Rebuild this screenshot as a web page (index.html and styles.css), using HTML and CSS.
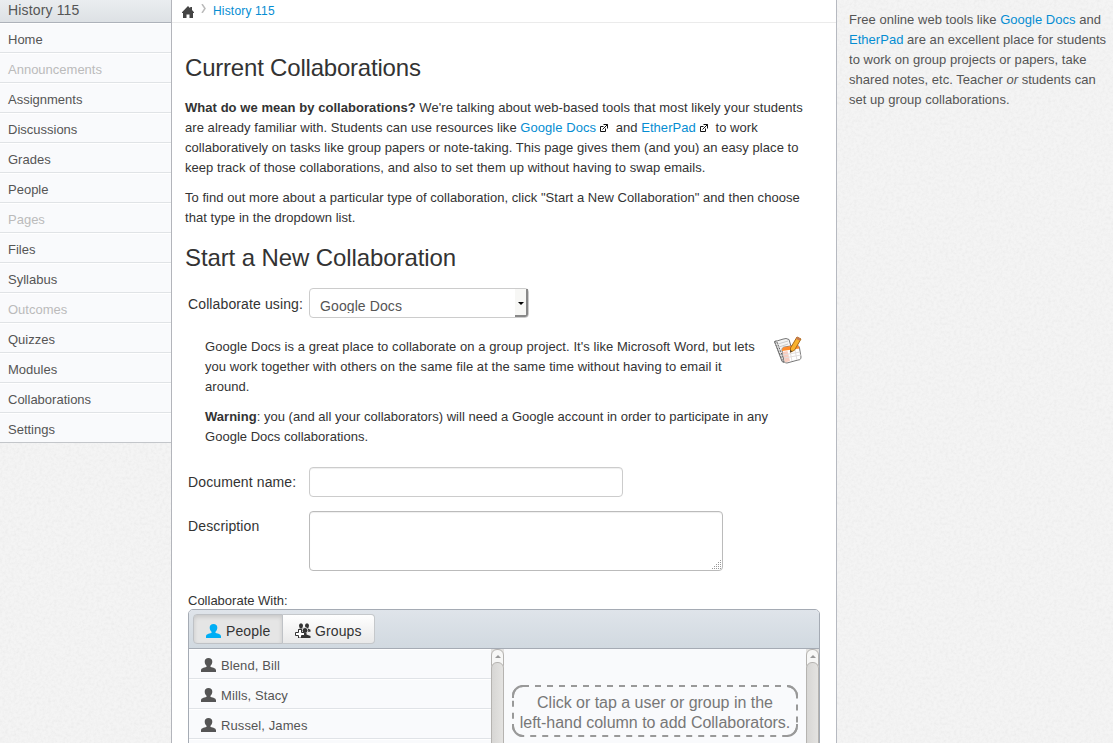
FILE: index.html
```html
<!DOCTYPE html>
<html lang="en">
<head>
<meta charset="utf-8">
<title>Collaborations: History 115</title>
<link rel="stylesheet" href="styles.css">
</head>
<body>
<svg class="defs" aria-hidden="true">
  <symbol id="person" viewBox="0 0 15 14"><path d="M7.500 0C9.900 0 11.300 1.300 11.300 3.500 11.300 5.500 10.500 7 9.500 7.800v1.200c3 .7 5.500 1.300 5.500 3.500V14H0v-1.500C0 10.300 2.500 9.700 5.500 9V7.800C4.500 7 3.700 5.500 3.700 3.500 3.700 1.300 5.100 0 7.500 0z"/></symbol>
  <symbol id="external" viewBox="0 0 8 8"><path d="M3.500 2.500h-3v5h5v-3M2.500 5.500l5-5M3.500.5h4v4" fill="none" stroke="#111"/></symbol>
</svg>
<div class="app">
  <aside class="side">
    <nav class="menu">
      <div class="course">History 115</div>
      <a>Home</a><a class="off">Announcements</a><a>Assignments</a><a>Discussions</a><a>Grades</a><a>People</a><a class="off">Pages</a><a>Files</a><a>Syllabus</a><a class="off">Outcomes</a><a>Quizzes</a><a>Modules</a><a>Collaborations</a><a>Settings</a>
    </nav>
  </aside>
  <main class="main">
    <div class="crumbs">
      <svg class="home" viewBox="0 0 12 12"><path d="M6 0l2.200 2.200V1H10v3l2 2.300V7h-1v5H7.500V8.500h-3V12H1V7H0v-.7z"/></svg>
      <svg class="chev" viewBox="0 0 5 9"><path d="M1 0l3 4.500L1 9" fill="none" stroke="#bbb" stroke-width="1.500"/></svg>
      <a class="link">History 115</a>
    </div>
    <div class="content">
      <h2 class="first">Current Collaborations</h2>
      <p class="text intro"><b>What do we mean by collaborations?</b> We're talking about web-based tools that most likely your students<br>are already familiar with. Students can use resources like <a class="link">Google Docs</a><svg class="ext"><use href="#external"/></svg> and <a class="link">EtherPad</a><svg class="ext"><use href="#external"/></svg> to work<br>collaboratively on tasks like group papers or note-taking. This page gives them (and you) an easy place to<br>keep track of those collaborations, and also to set them up without having to swap emails.</p>
      <p class="text more">To find out more about a particular type of collaboration, click "Start a New Collaboration" and then choose<br>that type in the dropdown list.</p>
      <h2 class="second">Start a New Collaboration</h2>
      <div class="row using"><label>Collaborate using:</label>
        <div class="select"><span>Google Docs</span><i class="drop"></i></div></div>
      <div class="info">
        <div>
          <p class="text about">Google Docs is a great place to collaborate on a group project. It's like Microsoft Word, but lets<br>you work together with others on the same file at the same time without having to email it<br>around.</p>
          <p class="text warning"><b>Warning</b>: you (and all your collaborators) will need a Google account in order to participate in any<br>Google Docs collaborations.</p>
        </div>
        <svg class="docs" viewBox="0 0 30 28">
          <path d="M1.500 5.500C5 5 9 3 13 2.500l3 1 5 17-10 6-2-1z" fill="#f4f4f4" stroke="#777"/>
          <path d="M1.500 5.500l2-.5 8 20-1.500 1z" fill="#ddd" stroke="#666" stroke-dasharray="2 1"/>
          <path d="M5 8l10-3M6 11l9-3" stroke="#ccc"/>
          <path d="M9 14c0-2 1-3 3-3l11-2c2 0 3 1 3.500 3l1.500 9c0 2-1 3-3 3l-11 3c-2 0-2.500-1-3-2z" fill="#fff" stroke="#777"/>
          <path d="M9 15c0-3 1-4 3-4l11-2c2 0 3 1 3.500 3.500z" fill="#ff8c2c"/>
          <path d="M9.500 16l5-1 2.500 10-5 1.500z" fill="#f8cdc0"/>
          <path d="M10 19l17-3M11 22l17-3M17 15l2 10M22 14l2 10" stroke="#e2dede" fill="none"/>
          <path d="M17.500 12l6.500-11 4 2-6.500 11.200-4 2z" fill="#f9b22d" stroke="#a86a1a"/>
          <path d="M24 .8l3.800 2-1.200 2-3.800-2z" fill="#c77b50"/><path d="M17.300 14v2.500l2-1.300z" fill="#333"/>
        </svg>
      </div>
      <div class="row name"><label>Document name:</label><div class="input"></div></div>
      <div class="row desc"><label>Description</label><div class="area"><svg class="grip" viewBox="0 0 10 10"><path d="M8 .5h1M6 2.500h1M8 2.500h1M4 4.500h1M6 4.500h1M8 4.500h1M2 6.500h1M4 6.500h1M6 6.500h1M8 6.500h1M0 8.500h1M2 8.500h1M4 8.500h1M6 8.500h1M8 8.500h1" stroke="#999"/></svg></div></div>
      <div class="with">Collaborate With:</div>
      <section class="picker">
        <div class="tabs">
          <div class="tab on"><svg class="person blue"><use href="#person"/></svg>People</div>
          <div class="tab"><svg class="group" viewBox="0 0 16 15"><g fill="#333"><ellipse cx="6" cy="2.800" rx="2" ry="2.500"/><ellipse cx="12" cy="2.800" rx="2" ry="2.500"/><path d="M3 8V6.500L5 5.500h2L9 6l2-.5h2l2.500 1.200v2H3z"/></g><ellipse cx="10" cy="7.500" rx="2.800" ry="3" fill="#333" stroke="#f7f7f7" stroke-width=".8"/><path d="M5 15v-2l4-1.500V10h2.500v1.500l4 1.500v2z" fill="#333"/><path d="M3.500 6.500h3v3h3v3h-3v2.500h-3v-2.500h-3v-3h3z" fill="#fff" stroke="#333"/></svg>Groups</div>
        </div>
        <div class="panes">
          <div class="people">
            <div><svg class="person"><use href="#person"/></svg>Blend, Bill</div>
            <div><svg class="person"><use href="#person"/></svg>Mills, Stacy</div>
            <div><svg class="person"><use href="#person"/></svg>Russel, James</div>
            <div></div>
          </div>
          <div class="scroll"><div class="up"></div><div class="thumb"></div></div>
          <div class="target"><div class="hint"><svg class="dash" viewBox="0 0 286 52"><rect x="1" y="1" width="284" height="50" rx="10"/><path d="M1 13v-2A10 10 0 0 1 11 1M275 1a10 10 0 0 1 10 10v2M285 39v2a10 10 0 0 1-10 10M11 51A10 10 0 0 1 1 41v-2"/></svg><span>Click or tap a user or group in the<br>left-hand column to add Collaborators.</span></div></div>
          <div class="scroll"><div class="up"></div><div class="thumb"></div></div>
        </div>
      </section>
    </div>
  </main>
  <aside class="right">
    <p class="text">Free online web tools like <a class="link">Google Docs</a> and<br><a class="link">EtherPad</a> are an excellent place for students<br>to work on group projects or papers, take<br>shared notes, etc. Teacher <em>or</em> students can<br>set up group collaborations.</p>
  </aside>
</div>
</body>
</html>
```
FILE: styles.css
```css
* { box-sizing: border-box; }
body { margin: 0; overflow: hidden; font: 13px/20px "Liberation Sans", Arial, sans-serif; color: #333;
  background: #f4f4f4 url("data:image/svg+xml,%3Csvg xmlns='http://www.w3.org/2000/svg' width='200' height='200'%3E%3Cfilter id='n'%3E%3CfeTurbulence type='fractalNoise' baseFrequency='.35' numOctaves='3' stitchTiles='stitch'/%3E%3CfeColorMatrix values='0 0 0 0 .5 0 0 0 0 .5 0 0 0 0 .5 .26 0 0 0 -.1'/%3E%3C/filter%3E%3Crect width='200' height='200' filter='url(%23n)'/%3E%3C/svg%3E"); }
.defs { display: none; }
.app { display: grid; grid-template-columns: 172px 665px 1fr; height: 743px; overflow: hidden; }
.link { color: #058dd2; }
.side { border-right: 1px solid #b3b5bb; }
.menu { display: flex; flex-direction: column; border-bottom: 1px solid #c3c6ca; }
.menu a { height: 30px; padding: 7px 8px 0; line-height: 20px; color: #555; background: #f9fafc; border-bottom: 1px solid #e0e3e6; box-shadow: inset 0 1px #fff; }
.menu a:last-child { height: 29px; border-bottom: 0; }
.menu .off { color: #bbb; }
.course { height: 23px; padding: 1px 8px; font-size: 14px; line-height: 18px; letter-spacing: .15px; color: #555; background: linear-gradient(#eaedf0, #dde1e5); border-bottom: 1px solid #adb2ba; }
.main { background: #fff; border-right: 1px solid #b6b9c0; min-width: 0; }
.crumbs { display: flex; align-items: flex-start; height: 23px; padding-left: 10px; border-bottom: 1px solid #ebebeb; }
.crumbs .link { font-size: 12px; line-height: 22px; margin-left: 7px; letter-spacing: .18px; }
.home { width: 12px; height: 12px; margin-top: 6px; fill: #444; }
.chev { width: 5px; height: 9px; margin: 4px 0 0 7px; }
.content { padding: 30px 16px 0 13px; }
h2 { margin: 0; font-size: 24px; font-weight: 400; line-height: 30px; letter-spacing: -.1px; white-space: nowrap; }
h2.first { letter-spacing: -.2px; }
.text { margin: 0 0 10px; white-space: nowrap; }
.intro { letter-spacing: .05px; }
.more { letter-spacing: .04px; }
.about { letter-spacing: .065px; }
.warning { letter-spacing: .02px; }
h2 + .text { margin-top: 15px; }
h2.second { margin-top: 15px; }
.ext { width: 8px; height: 8px; margin: 0 4px; vertical-align: 0; }
.row { display: flex; padding-left: 3px; }
.row label { width: 121px; height: 30px; font-size: 14px; line-height: 31px; letter-spacing: .12px; white-space: nowrap; }
.using { margin-top: 15px; }
.using label { line-height: 32px; }
.select { display: flex; justify-content: space-between; width: 220px; height: 30px; border: 1px solid #ccc; border-radius: 4px; padding-left: 10px; font-size: 14px; line-height: 34px; letter-spacing: .1px; color: #555; }
.select span { height: 24px; overflow: hidden; }
.drop { width: 13px; height: 28px; border-right: 2px solid #888; border-bottom: 2px solid #888; border-radius: 0 0 3px 0; background: #f7f7f5; display: flex; align-items: center; justify-content: center; }
.drop::before { content: ""; border: 3px solid transparent; border-top: 3px solid #000; border-bottom: 0; margin-top: 2px; }
.info { display: flex; justify-content: space-between; height: 130px; padding: 19px 17px 0 20px; }
.info > div { width: 569px; flex: none; }
.docs { width: 30px; height: 28px; flex: none; margin: -1px 0 0 -2px; }
.name { margin-top: 19px; }
.input { width: 314px; height: 30px; border: 1px solid #ccc; border-radius: 4px; box-shadow: inset 0 1px 1px #0001; }
.desc { margin-top: 14px; }
.area { display: flex; justify-content: flex-end; align-items: flex-end; width: 414px; height: 60px; border: 1px solid #bbb; border-radius: 4px; box-shadow: inset 0 1px 1px #0001; }
.grip { width: 10px; height: 10px; }
.with { margin: 20px 0 0 3px; height: 18px; }
.picker { width: 632px; height: 150px; margin-left: 3px; border: 1px solid #a5abb4; border-radius: 5px 5px 0 0; overflow: hidden; background: #f9fafc; }
.tabs { display: flex; height: 39px; padding: 4px; background: linear-gradient(#dfe4ea, #d1d9e0); border-bottom: 1px solid #a5abb4; }
.tab { display: flex; align-items: center; width: 92px; height: 30px; padding: 3px 0 0 12px; border: 1px solid #c5c8cb; border-left: 0; font-size: 14px; letter-spacing: .12px; background: linear-gradient(#fff, #e9e9e9); border-radius: 0 4px 4px 0; white-space: nowrap; }
.tab.on { width: 90px; border: 1px solid #bfc2c6; border-radius: 4px 0 0 4px; background: #e5e5e5; box-shadow: inset 0 2px 4px #0002; }
.person { width: 15px; height: 14px; margin: -1px 5px 0 0; fill: #555; flex: none; }
.person.blue { fill: #00aef5; margin-top: 0; }
.group { width: 16px; height: 15px; margin: -1px 4px 0 0; }
.panes { display: flex; height: 110px; }
.people { width: 302px; }
.people div { display: flex; align-items: center; height: 30px; padding: 4px 0 0 12px; letter-spacing: .1px; color: #555; border-bottom: 1px solid #e0e3e7; box-shadow: inset 0 1px #fff; }
.scroll { width: 13px; background: #e3e2e0; }
.up { display: flex; justify-content: center; height: 17px; padding-top: 5px; border: 1px solid #b5b3b0; border-radius: 6px 6px 0 0; background: #f7f7f6; }
.up::before { content: ""; height: 0; border: 3px solid transparent; border-bottom: 3px solid #999; border-top: 0; }
.thumb { margin-top: -4px; height: 100px; border: 1px solid #b5b3b0; border-radius: 6px 6px 0 0; background: linear-gradient(90deg, #d7d6d4, #e4e3e1); }
.target { width: 302px; padding: 36px 8px 0; }
.hint { position: relative; width: 286px; height: 52px; padding-top: 8px; text-align: center; font-size: 16px; line-height: 20px; letter-spacing: -.02px; color: #777; white-space: nowrap; }
.dash { position: absolute; inset: 0; width: 286px; height: 52px; fill: none; stroke: #999; stroke-width: 2; }
.dash rect { stroke-dasharray: 6 6; }
.right { padding: 10px 0 0 12px; color: #555; letter-spacing: .03px; }
```
